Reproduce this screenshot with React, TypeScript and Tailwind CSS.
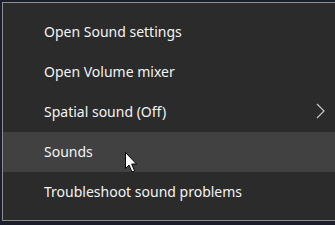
import type { FC } from "react";

type MenuItemProps = {
    label: string;
    active?: boolean;
    submenu?: boolean;
};

const MenuItem: FC<MenuItemProps> = ({ label, active, submenu }) => {
    return (
        <div
            className={`relative h-[40px] flex items-center pl-[41px] pr-[12px] ${active ? "bg-[#414141]" : ""}`}
        >
            <span className="text-[14px] text-[#f4f4f4] leading-none">{label}</span>
            {submenu && (
                <svg className="absolute left-[311px] top-[11px]" width="12" height="16" viewBox="0 0 12 16">
                    <path d="M3 1 L10 8 L3 15" fill="none" stroke="#c8c8c8" strokeWidth="1.2" />
                </svg>
            )}
        </div>
    );
};

const Cursor = () => (
    <svg className="absolute left-[124px] top-[151px]" width="14" height="23" viewBox="0 0 14 23">
        <path
            d="M1.5 1.5 L1.5 17.5 L5 14 L8 21 L10.6 19.9 L7.7 13 L12.5 13 Z"
            fill="#ffffff"
            stroke="#000000"
            strokeWidth="1"
            strokeLinejoin="round"
        />
    </svg>
);

export default function App() {
    const items: MenuItemProps[] = [
        { label: "Open Sound settings" },
        { label: "Open Volume mixer" },
        { label: "Spatial sound (Off)", submenu: true },
        { label: "Sounds", active: true },
        { label: "Troubleshoot sound problems" },
    ];

    return (
        <div
            className="relative w-[335px] h-[225px] overflow-hidden bg-[#1b1f2c] pt-[2px] pl-[2px]"
            style={{ fontFamily: '"Noto Sans", "Open Sans", sans-serif' }}
        >
            <div className="w-[345px] bg-[#2b2b2b] border-l border-t border-b border-[#8e8e90] pt-[9px] pb-[8px]">
                {items.map((item) => (
                    <MenuItem key={item.label} {...item} />
                ))}
            </div>
            <Cursor />
        </div>
    );
}
